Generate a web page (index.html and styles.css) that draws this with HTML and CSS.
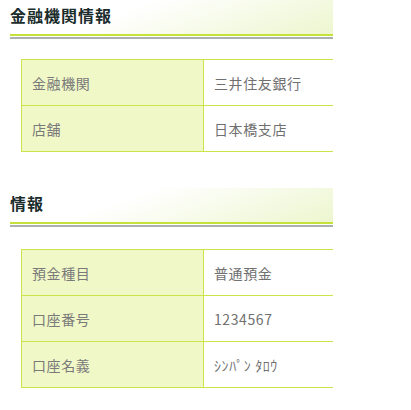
FILE: index.html
```html
<!DOCTYPE html>
<html lang="ja">
<head>
<meta charset="utf-8">
<link rel="stylesheet" href="styles.css">
</head>
<body>
<div class="wrap">
  <section class="block">
    <div class="heading"><h2 class="heading-title">金融機関情報</h2></div>
    <table class="info">
      <tr><th>金融機関</th><td>三井住友銀行</td></tr>
      <tr><th>店舗</th><td>日本橋支店</td></tr>
    </table>
  </section>
  <section class="block block-second">
    <div class="heading"><h2 class="heading-title">情報</h2></div>
    <table class="info">
      <tr><th>預金種目</th><td>普通預金</td></tr>
      <tr><th>口座番号</th><td>1234567</td></tr>
      <tr><th>口座名義</th><td>ｼﾝﾊﾟﾝ ﾀﾛｳ</td></tr>
    </table>
  </section>
</div>
</body>
</html>
```
FILE: styles.css
```css
html, body {
  margin: 0;
  padding: 0;
  background: #fff;
}
body {
  font-family: "Noto Sans CJK JP", "Noto Sans", sans-serif;
}
.wrap {
  width: 323px;
  margin-left: 10px;
  overflow: hidden;
}
.block-second {
  margin-top: 36px;
}
.heading {
  padding-bottom: 1px;
  border-bottom: 2px solid #a9b1b1;
}
.heading-title {
  margin: 0;
  height: 36px;
  box-sizing: border-box;
  padding-top: 5px;
  font-size: 16px;
  line-height: 20px;
  font-weight: bold;
  letter-spacing: 1px;
  color: #1a2c2c;
  border-bottom: 2px solid #c6e13a;
  background: linear-gradient(160deg, #ffffff 35%, #edf6cf 100%);
}
.info {
  margin-top: 20px;
  margin-left: 11px;
  width: 330px;
  border-collapse: collapse;
  font-size: 14px;
  letter-spacing: 0.6px;
}
.block-second .info {
  margin-top: 22px;
}
.info th, .info td {
  height: 46px;
  box-sizing: border-box;
  padding: 0 0 0 10px;
  border: 1px solid #cde34a;
  text-align: left;
  font-weight: normal;
  vertical-align: middle;
}
.info th {
  width: 182px;
  background: #f0f8c8;
  color: #7a7a7a;
}
.info td {
  color: #707070;
}
```
